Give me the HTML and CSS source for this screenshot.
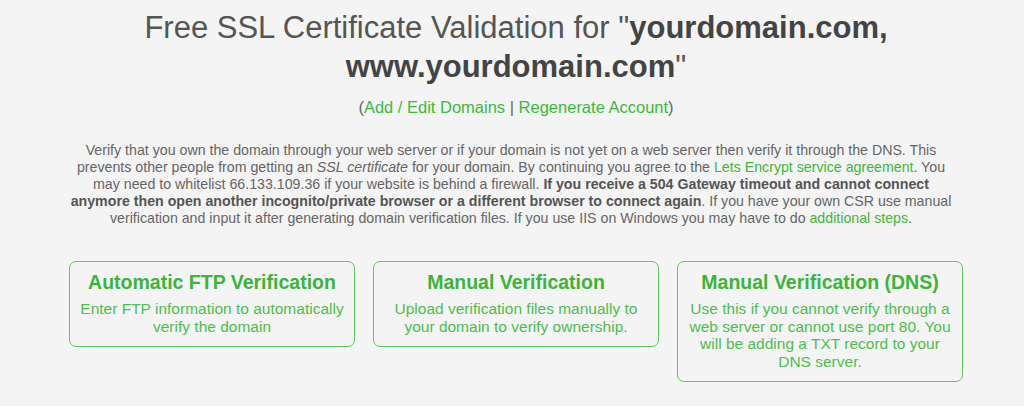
FILE: index.html
```html
<!DOCTYPE html>
<html lang="en">
<head>
    <meta charset="UTF-8">
    <title>Free SSL Certificate Validation</title>
    <link rel="stylesheet" href="styles.css">
</head>
<body>
<div class="page">
    <h1 class="title">Free SSL Certificate Validation for "<b>yourdomain.com, www.yourdomain.com</b>"</h1>
    <p class="links">(<a href="#">Add / Edit Domains</a> | <a href="#">Regenerate Account</a>)</p>
    <p class="intro">Verify that you own the domain through your web server or if your domain is not yet on a web server then verify it through the DNS. This prevents other people from getting an <i>SSL certificate</i> for your domain. By continuing you agree to the <a href="#">Lets Encrypt service agreement</a>. You may need to whitelist 66.133.109.36 if your website is behind a firewall. <b>If you receive a 504 Gateway timeout and cannot connect anymore then open another incognito/private browser or a different browser to connect again</b>. If you have your own CSR use manual verification and input it after generating domain verification files. If you use IIS on Windows you may have to do <a href="#">additional steps</a>.</p>
    <div class="methods">
        <a class="method" href="#">
            <span class="method-title">Automatic FTP Verification</span>
            <span class="method-text">Enter FTP information to automatically verify the domain</span>
        </a>
        <a class="method" href="#">
            <span class="method-title">Manual Verification</span>
            <span class="method-text">Upload verification files manually to your domain to verify ownership.</span>
        </a>
        <a class="method" href="#">
            <span class="method-title">Manual Verification (DNS)</span>
            <span class="method-text">Use this if you cannot verify through a web server or cannot use port 80. You will be adding a TXT record to your DNS server.</span>
        </a>
    </div>
</div>
</body>
</html>
```

FILE: styles.css
```css
body { margin: 0; padding-left: 8px; background-color: #f4f4f4; font-family: "Liberation Sans", Arial, sans-serif; color: #666666; }
a { color: #3cb93c; text-decoration: none; }
.page { width: 894px; margin: 0 auto; padding-top: 8px; text-align: center; }
.title { margin: 0 auto; width: 790px; font-size: 31px; line-height: 39px; font-weight: normal; color: #555555; }
.title b { color: #444444; }
.links { margin: 12px 0 0 0; font-size: 16.5px; line-height: 19px; }
.intro { margin: 25px 9px 0 -1px; font-size: 14.2px; line-height: 17px; }
.intro b { color: #555555; }
.methods { display: flex; align-items: flex-start; gap: 18px; margin-top: 34px; }
.method { flex: 1; display: flex; flex-direction: column; padding: 8px 10px 11px; border: 1px solid #5cc85c; border-radius: 7px; color: #4cbf4c; }
.method-title { font-size: 19.5px; font-weight: bold; line-height: 24px; color: #3ab53a; margin-bottom: 6px; }
.method-text { font-size: 15.5px; line-height: 17.6px; }
```
